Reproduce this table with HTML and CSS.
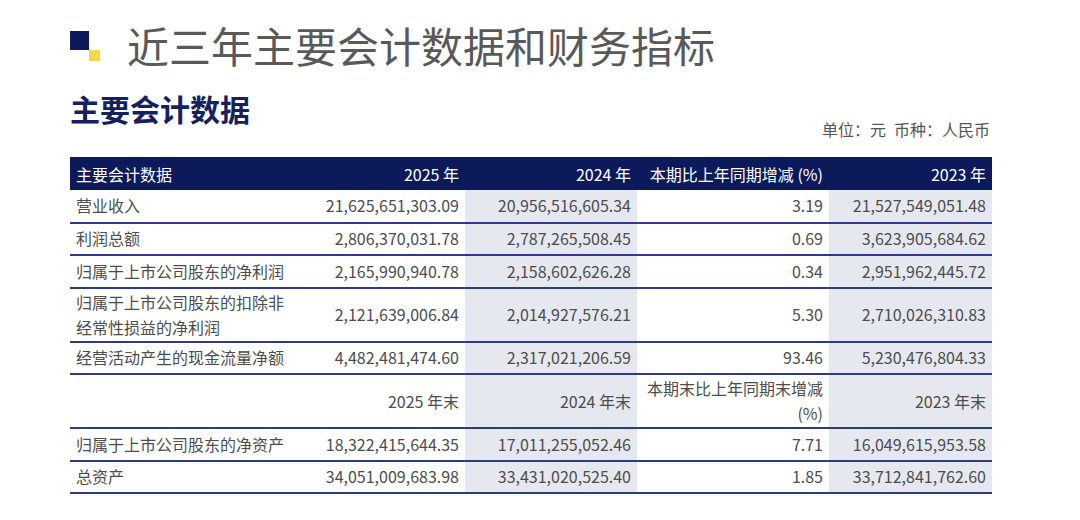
FILE: index.html
```html
<!DOCTYPE html>
<html lang="zh-CN">
<head>
<meta charset="utf-8">
<title>近三年主要会计数据和财务指标</title>
<link rel="stylesheet" href="styles.css">
</head>
<body>
<div class="page">
  <div class="title-row">
    <div class="mark"><span class="mark-navy"></span><span class="mark-yellow"></span></div>
    <h1 class="title">近三年主要会计数据和财务指标</h1>
  </div>
  <div class="sub-row">
    <h2 class="subtitle">主要会计数据</h2>
    <div class="unit">单位：元<span class="gap"></span>币种：人民币</div>
  </div>
  <table class="data">
    <colgroup>
      <col class="c1"><col class="c2"><col class="c3 shade"><col class="c4"><col class="c5 shade">
    </colgroup>
    <thead>
      <tr>
        <th class="left">主要会计数据</th>
        <th>2025 年</th>
        <th>2024 年</th>
        <th>本期比上年同期增减 (%)</th>
        <th>2023 年</th>
      </tr>
    </thead>
    <tbody>
      <tr><td class="left">营业收入</td><td>21,625,651,303.09</td><td class="g">20,956,516,605.34</td><td>3.19</td><td class="g">21,527,549,051.48</td></tr>
      <tr><td class="left">利润总额</td><td>2,806,370,031.78</td><td class="g">2,787,265,508.45</td><td>0.69</td><td class="g">3,623,905,684.62</td></tr>
      <tr><td class="left">归属于上市公司股东的净利润</td><td>2,165,990,940.78</td><td class="g">2,158,602,626.28</td><td>0.34</td><td class="g">2,951,962,445.72</td></tr>
      <tr><td class="left">归属于上市公司股东的扣除非经常性损益的净利润</td><td>2,121,639,006.84</td><td class="g">2,014,927,576.21</td><td>5.30</td><td class="g">2,710,026,310.83</td></tr>
      <tr><td class="left">经营活动产生的现金流量净额</td><td>4,482,481,474.60</td><td class="g">2,317,021,206.59</td><td>93.46</td><td class="g">5,230,476,804.33</td></tr>
      <tr><td class="left"></td><td>2025 年末</td><td class="g">2024 年末</td><td>本期末比上年同期末增减<br>(%)</td><td class="g">2023 年末</td></tr>
      <tr><td class="left">归属于上市公司股东的净资产</td><td>18,322,415,644.35</td><td class="g">17,011,255,052.46</td><td>7.71</td><td class="g">16,049,615,953.58</td></tr>
      <tr><td class="left">总资产</td><td>34,051,009,683.98</td><td class="g">33,431,020,525.40</td><td>1.85</td><td class="g">33,712,841,762.60</td></tr>
    </tbody>
  </table>
</div>
</body>
</html>
```

FILE: styles.css
```css
* { box-sizing: border-box; }
html, body { margin: 0; padding: 0; background: #ffffff; }
body {
  font-family: "Noto Sans CJK SC", "Noto Sans", sans-serif;
  color: #4a4a4a;
}
.page {
  width: 1080px;
  height: 520px;
  padding-left: 70px;
  overflow: hidden;
}
.title-row {
  height: 90px;
  display: flex;
  align-items: center;
}
.mark {
  width: 30px;
  height: 30px;
  display: grid;
  grid-template-columns: 19px 11px;
  grid-template-rows: 19px 11px;
  margin-top: 2px;
}
.mark-navy { background: #0c1a5c; grid-column: 1; grid-row: 1; }
.mark-yellow { background: #f7d84a; grid-column: 2; grid-row: 2; }
.title {
  margin: 0 0 0 27px;
  font-size: 42px;
  font-weight: 400;
  line-height: 56px;
  color: #595959;
}
.sub-row {
  width: 922px;
  height: 49px;
  display: flex;
  justify-content: space-between;
}
.subtitle {
  margin: 0;
  font-size: 30px;
  font-weight: 700;
  line-height: 36px;
  color: #14215e;
  align-self: flex-start;
}
.unit {
  align-self: flex-end;
  font-size: 16px;
  line-height: 20px;
  color: #555555;
  padding-right: 2px;
}
.unit .gap {
  display: inline-block;
  width: 8px;
}
.data {
  margin-top: 18px;
  width: 922px;
  border-collapse: collapse;
  table-layout: fixed;
  font-size: 16px;
}
.c1 { width: 225px; }
.c2 { width: 170px; }
.c3 { width: 172px; }
.c4 { width: 192px; }
.c5 { width: 163px; }
.data th {
  background: #0c1a5c;
  color: #ffffff;
  font-weight: 400;
  text-align: right;
  height: 33px;
  padding: 0 6px;
  line-height: 22px;
  white-space: nowrap;
}
.data tbody tr { height: 32.5px; }
.data td {
  text-align: right;
  padding: 1px 6px;
  line-height: 25px;
  border-bottom: 2px solid #2e3b85;
  color: #4d4d4d;
}
.data td.g { background: #e6e8ef; }
.data .left { text-align: left; }
```
